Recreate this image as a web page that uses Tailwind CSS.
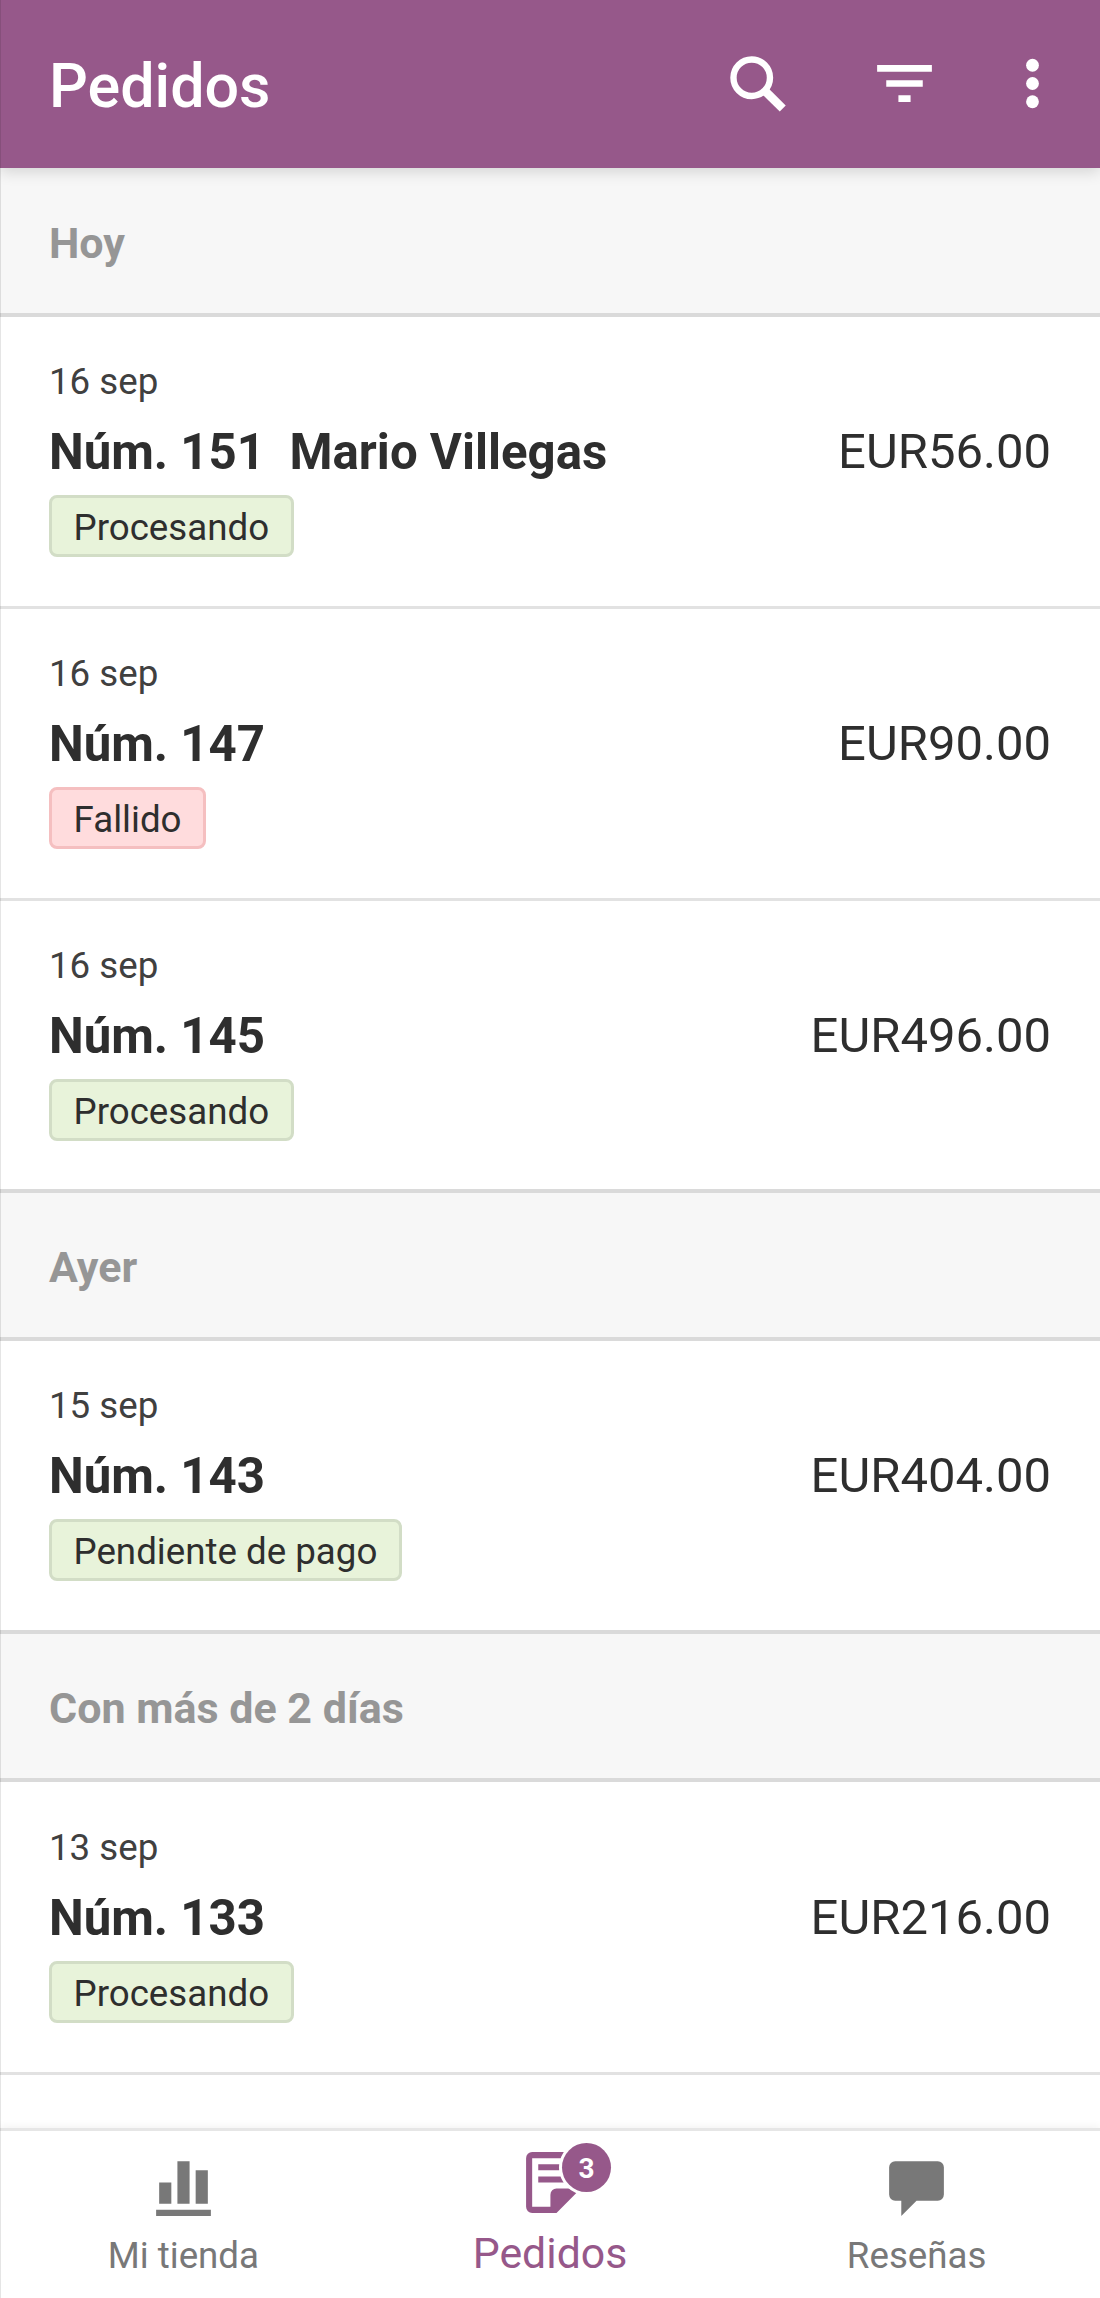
<!DOCTYPE html>
<html lang="es">
  <head>
    <meta charset="UTF-8" />
    <meta name="viewport" content="width=device-width, initial-scale=1.0" />
    <script src="https://cdn.jsdelivr.net/npm/@tailwindcss/browser@4"></script>
    <title>Pedidos</title>
  </head>
  <body class="bg-white">
    <div
      class="relative flex flex-col w-[1100px] h-[2298px] overflow-hidden bg-white font-[Roboto,sans-serif] text-[#2e2e2e]"
    >
      <div class="absolute inset-y-0 left-0 w-px bg-black/10 z-20"></div>

      <header
        class="relative z-10 flex items-center h-[168px] shrink-0 bg-[#96588a] text-white shadow-[0_4px_14px_rgba(0,0,0,0.14)]"
      >
        <h1 class="flex-1 pl-[49px] pt-[3px] text-[61px] leading-[72px] font-medium">Pedidos</h1>
        <svg
          class="w-[73px] h-[73px] mr-[74px] mb-[2px]"
          viewBox="0 0 24 24"
          fill="none"
          stroke="currentColor"
        >
          <circle cx="10.1" cy="10.1" r="6" stroke-width="2.1" />
          <path d="M14.6 14.6l5.7 5.6" stroke-width="2.8" />
        </svg>
        <svg class="w-[73px] h-[73px] mr-[55px] mb-[2px]" viewBox="0 0 24 24" fill="currentColor">
          <path d="M10 18.1h4v-2.2h-4v2.2zM3 5.9v2.2h18V5.9H3zm3 7.2h12v-2.2H6v2.2z" />
        </svg>
        <svg class="w-[73px] h-[73px] mr-[31px] mb-[2px]" viewBox="0 0 24 24" fill="currentColor">
          <circle cx="12" cy="6" r="2.1" />
          <circle cx="12" cy="12" r="2.1" />
          <circle cx="12" cy="18" r="2.1" />
        </svg>
      </header>

      <main class="flex flex-col flex-1 min-h-0 overflow-hidden">
        <h2
          class="flex items-center h-[149px] shrink-0 px-[49px] pt-[5px] bg-[#f7f7f7] border-b-4 border-[#dadada] text-[43px] font-bold text-[#969696]"
        >
          Hoy
        </h2>

        <article class="h-[292px] shrink-0 px-[49px] pt-[43px] border-b-3 border-[#e2e2e2]">
          <p class="text-[36.7px] leading-[44px] text-[#404040]">16 sep</p>
          <div class="flex justify-between mt-[19px] text-[49px] leading-[58px]">
            <p class="text-[49.2px] font-bold whitespace-pre">Núm. 151  Mario Villegas</p>
            <p>EUR56.00</p>
          </div>
          <span
            class="inline-block mt-[14px] h-[62px] px-[21.5px] border-3 border-[#d2ddc6] rounded-[8px] bg-[#e8f3da] text-[36.7px] leading-[60px]"
            >Procesando</span
          >
        </article>

        <article class="h-[292px] shrink-0 px-[49px] pt-[43px] border-b-3 border-[#e2e2e2]">
          <p class="text-[36.7px] leading-[44px] text-[#404040]">16 sep</p>
          <div class="flex justify-between mt-[19px] text-[49px] leading-[58px]">
            <p class="text-[49.2px] font-bold">Núm. 147</p>
            <p>EUR90.00</p>
          </div>
          <span
            class="inline-block mt-[14px] h-[62px] px-[21.5px] border-3 border-[#f5bfc0] rounded-[8px] bg-[#ffdcdd] text-[36.7px] leading-[60px]"
            >Fallido</span
          >
        </article>

        <article class="h-[292px] shrink-0 px-[49px] pt-[43px] border-b-4 border-[#dadada]">
          <p class="text-[36.7px] leading-[44px] text-[#404040]">16 sep</p>
          <div class="flex justify-between mt-[19px] text-[49px] leading-[58px]">
            <p class="text-[49.2px] font-bold">Núm. 145</p>
            <p>EUR496.00</p>
          </div>
          <span
            class="inline-block mt-[14px] h-[62px] px-[21.5px] border-3 border-[#d2ddc6] rounded-[8px] bg-[#e8f3da] text-[36.7px] leading-[60px]"
            >Procesando</span
          >
        </article>

        <h2
          class="flex items-center h-[148px] shrink-0 px-[49px] pt-[5px] bg-[#f7f7f7] border-b-4 border-[#dadada] text-[43px] font-bold text-[#969696]"
        >
          Ayer
        </h2>

        <article class="h-[293px] shrink-0 px-[49px] pt-[43px] border-b-4 border-[#dadada]">
          <p class="text-[36.7px] leading-[44px] text-[#404040]">15 sep</p>
          <div class="flex justify-between mt-[19px] text-[49px] leading-[58px]">
            <p class="text-[49.2px] font-bold">Núm. 143</p>
            <p>EUR404.00</p>
          </div>
          <span
            class="inline-block mt-[14px] h-[62px] px-[21.5px] border-3 border-[#d2ddc6] rounded-[8px] bg-[#e8f3da] text-[36.7px] leading-[60px]"
            >Pendiente de pago</span
          >
        </article>

        <h2
          class="flex items-center h-[148px] shrink-0 px-[49px] pt-[5px] bg-[#f7f7f7] border-b-4 border-[#dadada] text-[43px] font-bold text-[#969696]"
        >
          Con más de 2 días
        </h2>

        <article class="h-[293px] shrink-0 px-[49px] pt-[44px] border-b-3 border-[#e2e2e2]">
          <p class="text-[36.7px] leading-[44px] text-[#404040]">13 sep</p>
          <div class="flex justify-between mt-[19px] text-[49px] leading-[58px]">
            <p class="text-[49.2px] font-bold">Núm. 133</p>
            <p>EUR216.00</p>
          </div>
          <span
            class="inline-block mt-[14px] h-[62px] px-[21.5px] border-3 border-[#d2ddc6] rounded-[8px] bg-[#e8f3da] text-[36.7px] leading-[60px]"
            >Procesando</span
          >
        </article>
      </main>

      <nav
        class="relative grid grid-cols-3 h-[170px] shrink-0 bg-white border-t-3 border-[#e6e6e6] text-[#787878] shadow-[0_-2px_8px_rgba(0,0,0,0.05)]"
      >
        <a class="flex flex-col items-center pt-[21px]">
          <svg class="w-[73px] h-[73px]" viewBox="0 0 24 24" fill="currentColor">
            <path d="M3 19h18v2H3zM4 10h4v7H4zM10 3h4v14h-4zM16 6h4v11h-4z" />
          </svg>
          <span class="mt-[9px] text-[36.7px] leading-[44px]">Mi tienda</span>
        </a>
        <a class="flex flex-col items-center pt-[15px] text-[#96588a]">
          <div class="relative ml-[13px]">
            <svg class="w-[73px] h-[73px]" viewBox="0 0 24 24" fill="currentColor">
              <path
                d="M4 2a2 2 0 0 0-2 2v16a2 2 0 0 0 2 2h8l8-8V4a2 2 0 0 0-2-2zM4 4h14v10h-6a2 2 0 0 0-2 2v4H4z"
              />
              <path d="M6 6h7v2H6zM6 10h9v2H6z" />
            </svg>
            <span
              class="absolute left-[42px] -top-[3px] flex items-center justify-center w-[49px] h-[49px] pt-[2px] rounded-full bg-[#96588a] ring-3 ring-white text-[28px] font-bold text-white"
              >3</span
            >
          </div>
          <span class="mt-[9px] text-[42.8px] leading-[51px]">Pedidos</span>
        </a>
        <a class="flex flex-col items-center pt-[21px]">
          <svg class="w-[73px] h-[73px]" viewBox="0 0 24 24" fill="currentColor">
            <path
              d="M5 3h14a2 2 0 0 1 2 2v9a2 2 0 0 1-2 2h-7l-5 5v-5H5a2 2 0 0 1-2-2V5a2 2 0 0 1 2-2z"
            />
          </svg>
          <span class="mt-[9px] text-[36.7px] leading-[44px]">Reseñas</span>
        </a>
      </nav>
    </div>
  </body>
</html>
